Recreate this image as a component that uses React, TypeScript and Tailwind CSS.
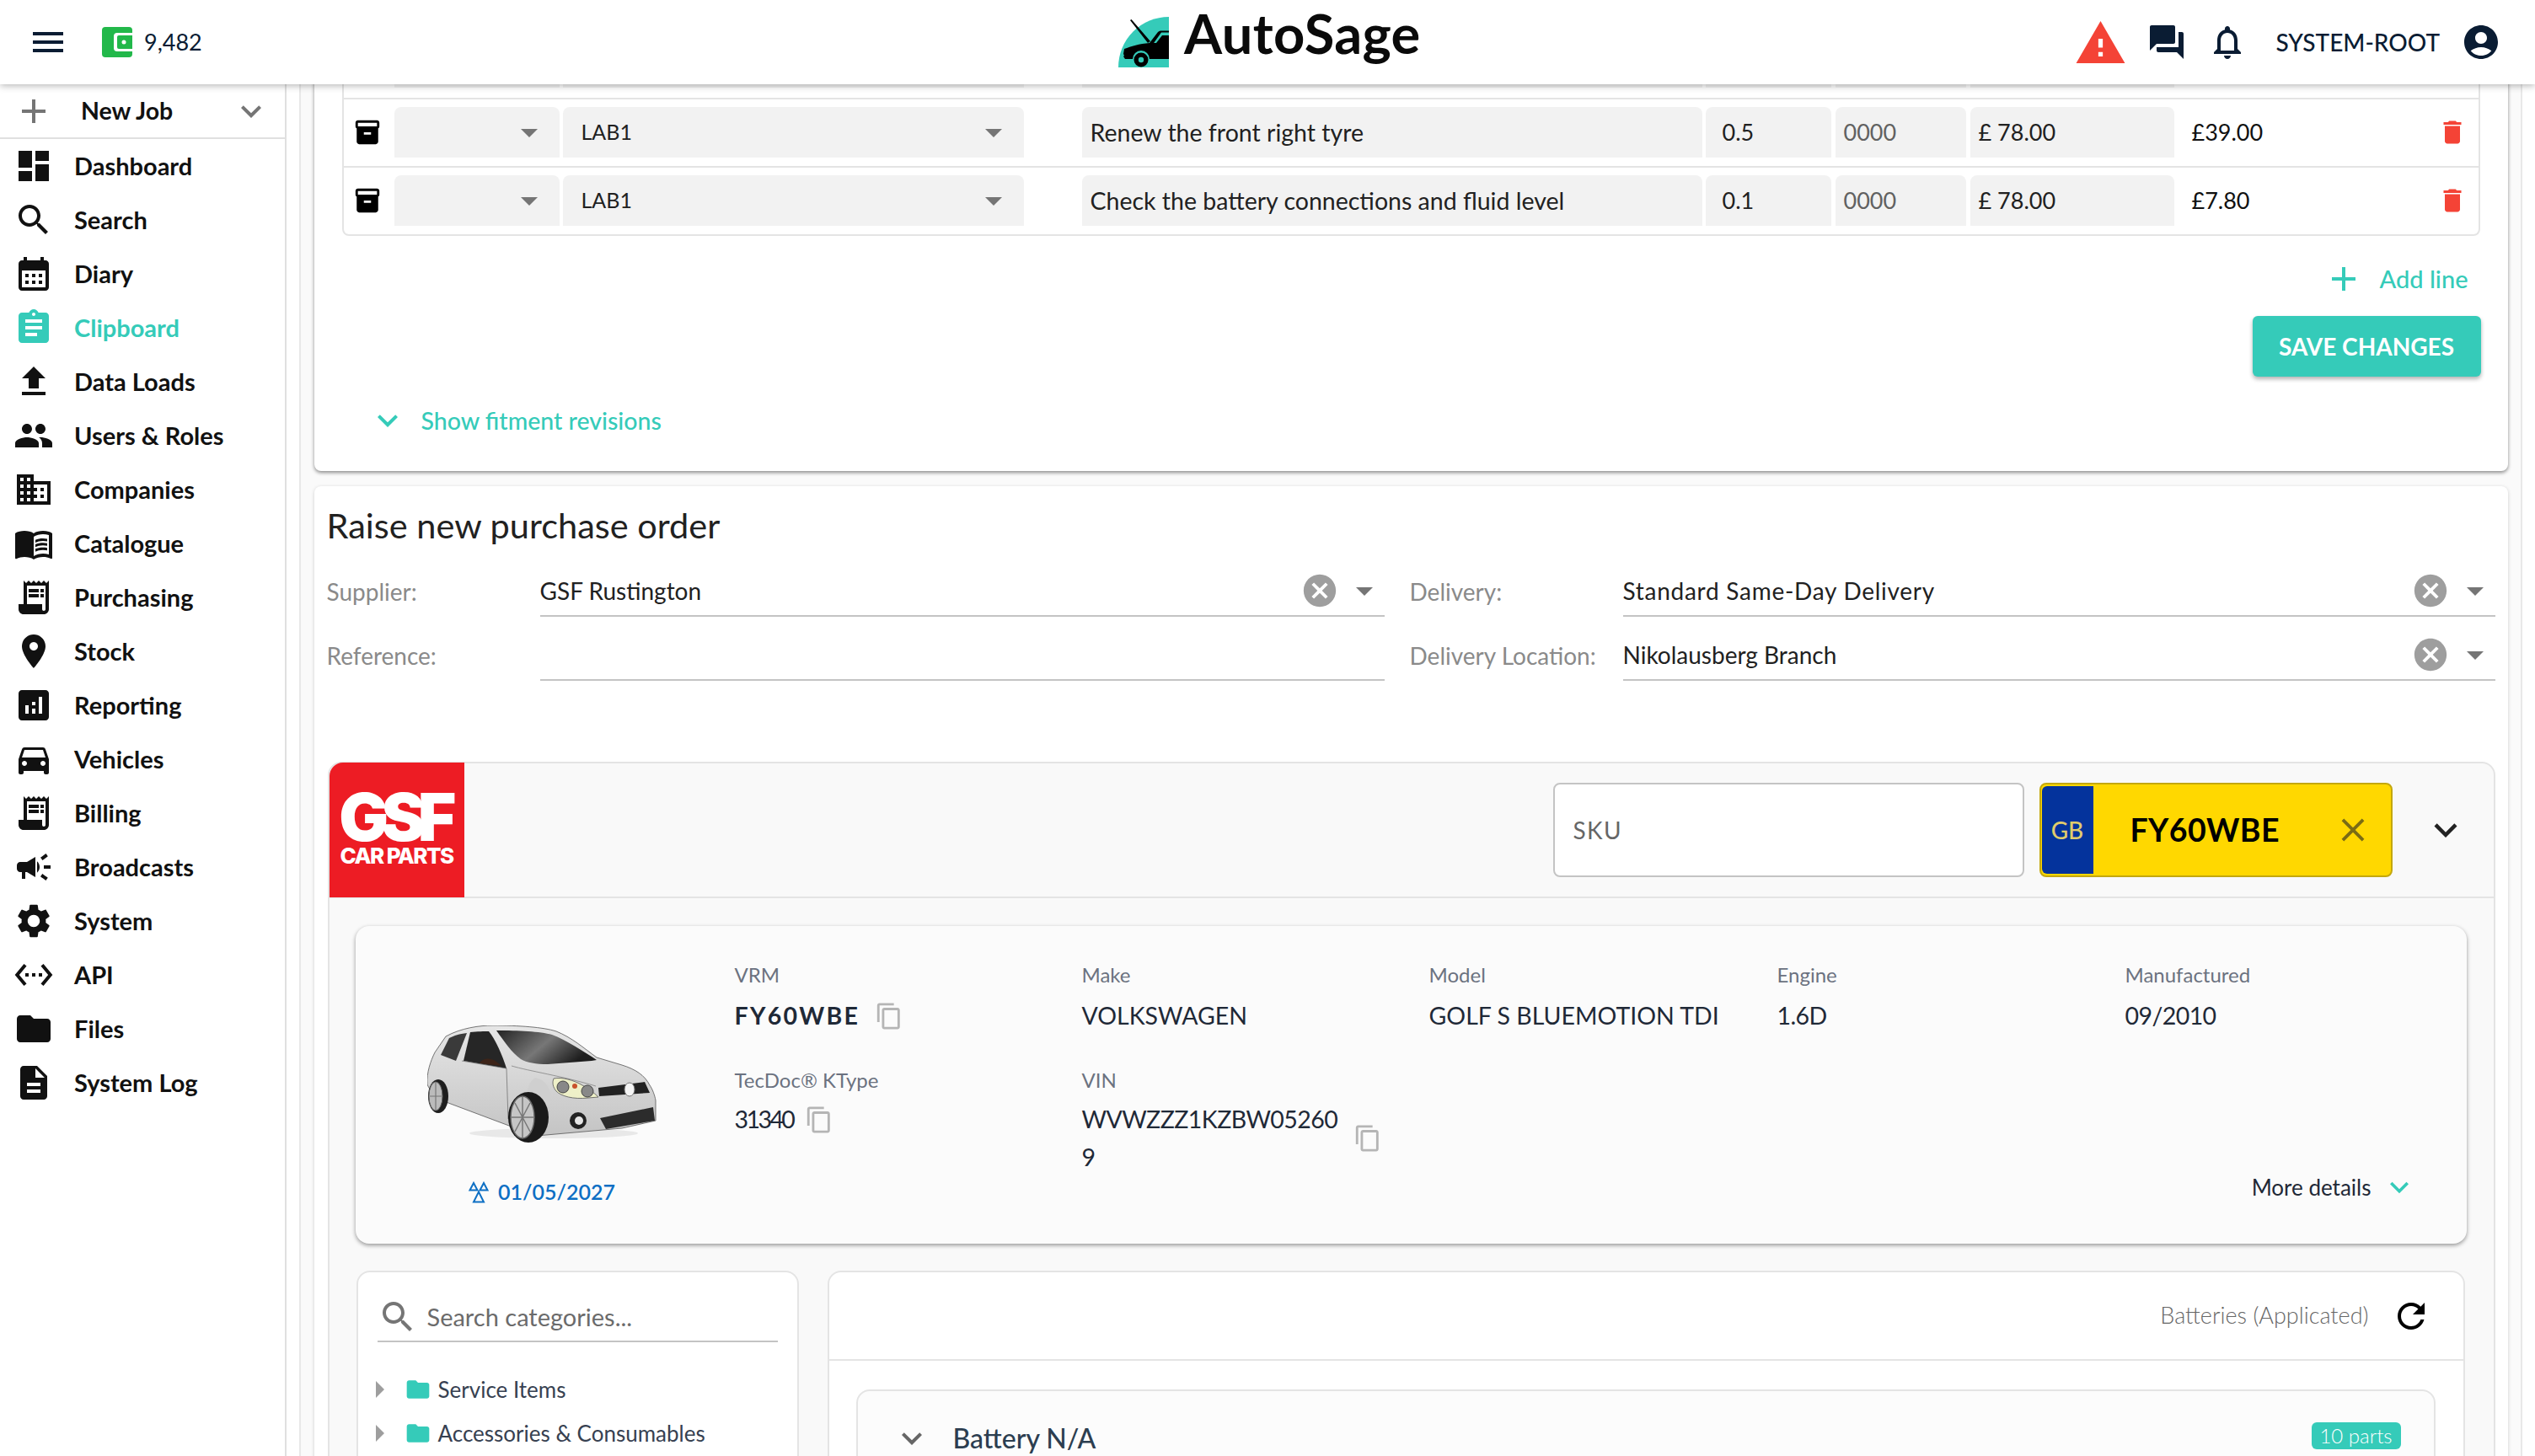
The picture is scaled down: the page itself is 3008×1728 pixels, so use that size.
import React from "react";

const P = {
  menu: "M3 18h18v-2H3v2zm0-5h18v-2H3v2zm0-7v2h18V6H3z",
  add: "M19 13h-6v6h-2v-6H5v-2h6V5h2v6h6v2z",
  more: "M16.59 8.59L12 13.17 7.41 8.59 6 10l6 6 6-6z",
  dashboard: "M3 13h8V3H3v10zm0 8h8v-6H3v6zm10 0h8V11h-8v10zm0-18v6h8V3h-8z",
  search:
    "M15.5 14h-.79l-.28-.27C15.41 12.59 16 11.11 16 9.5 16 5.91 13.09 3 9.5 3S3 5.91 3 9.5 5.91 16 9.5 16c1.61 0 3.09-.59 4.23-1.57l.27.28v.79l5 4.99L20.49 19l-4.99-5zm-6 0C7.01 14 5 11.99 5 9.5S7.01 5 9.5 5 14 7.01 14 9.5 11.99 14 9.5 14z",
  diary:
    "M19 4h-1V2h-2v2H8V2H6v2H5c-1.11 0-1.99.9-1.99 2L3 20c0 1.1.89 2 2 2h14c1.1 0 2-.9 2-2V6c0-1.1-.9-2-2-2zm0 16H5V10h14v10zM9 14H7v-2h2v2zm4 0h-2v-2h2v2zm4 0h-2v-2h2v2zm-8 4H7v-2h2v2zm4 0h-2v-2h2v2zm4 0h-2v-2h2v2z",
  clipboard:
    "M19 3h-4.18C14.4 1.84 13.3 1 12 1c-1.3 0-2.4.84-2.82 2H5c-1.1 0-2 .9-2 2v14c0 1.1.9 2 2 2h14c1.1 0 2-.9 2-2V5c0-1.1-.9-2-2-2zm-7 0c.55 0 1 .45 1 1s-.45 1-1 1-1-.45-1-1 .45-1 1-1zm2 14H7v-2h7v2zm3-4H7v-2h10v2zm0-4H7V7h10v2z",
  upload: "M9 16h6v-6h4l-7-7-7 7h4v6zm-4 2h14v2H5v-2z",
  people:
    "M16 11c1.66 0 2.99-1.34 2.99-3S17.66 5 16 5c-1.66 0-3 1.34-3 3s1.34 3 3 3zm-8 0c1.66 0 2.99-1.34 2.99-3S9.66 5 8 5C6.34 5 5 6.34 5 8s1.34 3 3 3zm0 2c-2.33 0-7 1.17-7 3.5V19h14v-2.5c0-2.33-4.67-3.5-7-3.5zm8 0c-.29 0-.62.02-.97.05 1.16.84 1.97 1.97 1.97 3.45V19h6v-2.5c0-2.33-4.67-3.5-7-3.5z",
  domain:
    "M12 7V3H2v18h20V7H12zM6 19H4v-2h2v2zm0-4H4v-2h2v2zm0-4H4V9h2v2zm0-4H4V5h2v2zm4 12H8v-2h2v2zm0-4H8v-2h2v2zm0-4H8V9h2v2zm0-4H8V5h2v2zm10 12h-8v-2h2v-2h-2v-2h2v-2h-2V9h8v10zm-2-8h-2v2h2v-2zm0 4h-2v2h2v-2z",
  book:
    "M21 5c-1.11-.35-2.33-.5-3.5-.5-1.95 0-4.05.4-5.5 1.5-1.45-1.1-3.55-1.5-5.5-1.5S2.45 4.9 1 6v14.65c0 .25.25.5.5.5.1 0 .15-.05.25-.05C3.1 20.45 5.05 20 6.5 20c1.95 0 4.05.4 5.5 1.5 1.35-.85 3.8-1.5 5.5-1.5 1.65 0 3.35.3 4.75 1.05.1.05.15.05.25.05.25 0 .5-.25.5-.5V6c-.6-.45-1.25-.75-2-1zm0 13.5c-1.1-.35-2.3-.5-3.5-.5-1.7 0-4.15.65-5.5 1.5V8c1.35-.85 3.8-1.5 5.5-1.5 1.2 0 2.4.15 3.5.5v11.5zM17.5 10.5c.88 0 1.73.09 2.5.26V9.24c-.79-.15-1.64-.24-2.5-.24-1.7 0-3.24.29-4.5.83v1.66c1.13-.64 2.7-.99 4.5-.99zM13 12.49v1.66c1.13-.64 2.7-.99 4.5-.99.88 0 1.73.09 2.5.26V11.9c-.79-.15-1.64-.24-2.5-.24-1.7 0-3.24.3-4.5.83zM17.5 14.33c-1.7 0-3.24.29-4.5.83v1.66c1.13-.64 2.7-.99 4.5-.99.88 0 1.73.09 2.5.26v-1.52c-.79-.16-1.64-.24-2.5-.24z",
  receipt:
    "M19.5 3.5 18 2l-1.5 1.5L15 2l-1.5 1.5L12 2l-1.5 1.5L9 2 7.5 3.5 6 2v14H3v3c0 1.66 1.34 3 3 3h12c1.66 0 3-1.34 3-3V2l-1.5 1.5zM19 19c0 .55-.45 1-1 1s-1-.45-1-1v-3H8V5h11v14zM9 7h6v2H9zm7 0h2v2h-2zm-7 3h6v2H9zm7 0h2v2h-2z",
  place:
    "M12 2C8.13 2 5 5.13 5 9c0 5.25 7 13 7 13s7-7.75 7-13c0-3.87-3.13-7-7-7zm0 9.5c-1.38 0-2.5-1.12-2.5-2.5s1.12-2.5 2.5-2.5 2.5 1.12 2.5 2.5-1.12 2.5-2.5 2.5z",
  analytics:
    "M19 3H5c-1.1 0-2 .9-2 2v14c0 1.1.9 2 2 2h14c1.1 0 2-.9 2-2V5c0-1.1-.9-2-2-2zM9 17H7v-5h2v5zm4 0h-2v-3h2v3zm0-5h-2v-2h2v2zm4 5h-2V7h2v10z",
  car:
    "M18.92 6.01C18.72 5.42 18.16 5 17.5 5h-11c-.66 0-1.21.42-1.42 1.01L3 12v8c0 .55.45 1 1 1h1c.55 0 1-.45 1-1v-1h12v1c0 .55.45 1 1 1h1c.55 0 1-.45 1-1v-8l-2.08-5.99zM6.5 16c-.83 0-1.5-.67-1.5-1.5S5.67 13 6.5 13s1.5.67 1.5 1.5S7.33 16 6.5 16zm11 0c-.83 0-1.5-.67-1.5-1.5s.67-1.5 1.5-1.5 1.5.67 1.5 1.5-.67 1.5-1.5 1.5zM5 11l1.5-4.5h11L19 11H5z",
  campaign:
    "M18 11v2h4v-2h-4zm-2 6.61c.96.71 2.21 1.65 3.2 2.39.4-.53.8-1.07 1.2-1.6-.99-.74-2.24-1.68-3.2-2.4-.4.54-.8 1.08-1.2 1.61zM20.4 5.6c-.4-.53-.8-1.07-1.2-1.6-.99.74-2.24 1.68-3.2 2.4.4.53.8 1.07 1.2 1.6.96-.72 2.21-1.65 3.2-2.4zM4 9c-1.1 0-2 .9-2 2v2c0 1.1.9 2 2 2h1v4h2v-4h1l5 3V6L8 9H4zm11.5 3c0-1.33-.58-2.53-1.5-3.35v6.69c.92-.81 1.5-2.01 1.5-3.34z",
  settings:
    "M19.14 12.94c.04-.3.06-.61.06-.94 0-.32-.02-.64-.07-.94l2.03-1.58c.18-.14.23-.41.12-.61l-1.92-3.32c-.12-.22-.37-.29-.59-.22l-2.39.96c-.5-.38-1.03-.7-1.62-.94l-.36-2.54c-.04-.24-.24-.41-.48-.41h-3.84c-.24 0-.43.17-.47.41l-.36 2.54c-.59.24-1.13.57-1.62.94l-2.39-.96c-.22-.08-.47 0-.59.22L2.74 8.87c-.12.21-.08.47.12.61l2.03 1.58c-.05.3-.09.63-.09.94s.02.64.07.94l-2.03 1.58c-.18.14-.23.41-.12.61l1.92 3.32c.12.22.37.29.59.22l2.39-.96c.5.38 1.03.7 1.62.94l.36 2.54c.05.24.24.41.48.41h3.84c.24 0 .44-.17.47-.41l.36-2.54c.59-.24 1.13-.56 1.62-.94l2.39.96c.22.08.47 0 .59-.22l1.92-3.32c.12-.22.07-.47-.12-.61l-2.01-1.58zM12 15.6c-1.98 0-3.6-1.62-3.6-3.6s1.62-3.6 3.6-3.6 3.6 1.62 3.6 3.6-1.62 3.6-3.6 3.6z",
  api:
    "M7.77 6.76L6.23 5.48.82 12l5.41 6.52 1.54-1.28L3.42 12l4.35-5.24zM7 13h2v-2H7v2zm10-2h-2v2h2v-2zm-6 2h2v-2h-2v2zm6.77-7.52l-1.54 1.28L20.58 12l-4.35 5.24 1.54 1.28L23.18 12l-5.41-6.52z",
  folder: "M10 4H4c-1.1 0-1.99.9-1.99 2L2 18c0 1.1.9 2 2 2h16c1.1 0 2-.9 2-2V8c0-1.1-.9-2-2-2h-8l-2-2z",
  doc:
    "M14 2H6c-1.1 0-1.99.9-1.99 2L4 20c0 1.1.89 2 1.99 2H18c1.1 0 2-.9 2-2V8l-6-6zm2 16H8v-2h8v2zm0-4H8v-2h8v2zm-3-5V3.5L18.5 9H13z",
  inventory:
    "M20 2H4c-1 0-2 .9-2 2v3.01c0 .72.43 1.34 1 1.69V20c0 1.1 1.1 2 2 2h14c.9 0 2-.9 2-2V8.7c.57-.35 1-.97 1-1.69V4c0-1.1-1-2-2-2zm-5 12H9v-2h6v2zm5-7H4V4l16-.02V7z",
  trash: "M6 19c0 1.1.9 2 2 2h8c1.1 0 2-.9 2-2V7H6v12zM19 4h-3.5l-1-1h-5l-1 1H5v2h14V4z",
  drop: "M7 10l5 5 5-5z",
  right: "M10 17l5-5-5-5v10z",
  cancel:
    "M12 2C6.47 2 2 6.47 2 12s4.47 10 10 10 10-4.47 10-10S17.53 2 12 2zm5 13.59L15.59 17 12 13.41 8.41 17 7 15.59 10.59 12 7 8.41 8.41 7 12 10.59 15.59 7 17 8.41 13.41 12 17 15.59z",
  copy: "M16 1H4c-1.1 0-2 .9-2 2v14h2V3h12V1zm3 4H8c-1.1 0-2 .9-2 2v14c0 1.1.9 2 2 2h11c1.1 0 2-.9 2-2V7c0-1.1-.9-2-2-2zm0 16H8V7h11v14z",
  refresh:
    "M17.65 6.35C16.2 4.9 14.21 4 12 4c-4.42 0-7.99 3.58-7.99 8s3.57 8 7.99 8c3.73 0 6.84-2.55 7.73-6h-2.08c-.82 2.33-3.04 4-5.65 4-3.31 0-6-2.69-6-6s2.69-6 6-6c1.66 0 3.14.69 4.22 1.78L13 11h7V4l-2.35 2.35z",
  close: "M19 6.41L17.59 5 12 10.59 6.41 5 5 6.41 10.59 12 5 17.59 6.41 19 12 13.41 17.59 19 19 17.59 13.41 12z",
  warning: "M1 21h22L12 2 1 21zm12-3h-2v-2h2v2zm0-4h-2v-4h2v4z",
  forum:
    "M21 6h-2v9H6v2c0 .55.45 1 1 1h11l4 4V7c0-.55-.45-1-1-1zm-4 6V3c0-.55-.45-1-1-1H3c-.55 0-1 .45-1 1v14l4-4h10c.55 0 1-.45 1-1z",
  bell:
    "M12 22c1.1 0 2-.9 2-2h-4c0 1.1.9 2 2 2zm6-6v-5c0-3.07-1.63-5.64-4.5-6.32V4c0-.83-.67-1.5-1.5-1.5s-1.5.67-1.5 1.5v.68C7.64 5.36 6 7.92 6 11v5l-2 2v1h16v-1l-2-2zm-2 1H8v-6c0-2.48 1.51-4.5 4-4.5s4 2.02 4 4.5v6z",
  account:
    "M12 2C6.48 2 2 6.48 2 12s4.48 10 10 10 10-4.48 10-10S17.52 2 12 2zm0 4c1.93 0 3.5 1.57 3.5 3.5S13.93 13 12 13s-3.5-1.57-3.5-3.5S10.07 6 12 6zm0 14c-2.03 0-4.43-.82-6.14-2.88C7.55 15.8 9.68 15 12 15s4.45.8 6.14 2.12C16.43 19.18 14.03 20 12 20z",
};

type IconProps = { d: string; className?: string; box?: string };

const Icon: React.FC<IconProps> = ({ d, className, box = "0 0 24 24" }) => (
  <svg viewBox={box} className={className} fill="currentColor">
    <path d={d} />
  </svg>
);

const NAV = [
  { label: "Dashboard", icon: P.dashboard },
  { label: "Search", icon: P.search },
  { label: "Diary", icon: P.diary },
  { label: "Clipboard", icon: P.clipboard, active: true },
  { label: "Data Loads", icon: P.upload },
  { label: "Users & Roles", icon: P.people },
  { label: "Companies", icon: P.domain },
  { label: "Catalogue", icon: P.book },
  { label: "Purchasing", icon: P.receipt },
  { label: "Stock", icon: P.place },
  { label: "Reporting", icon: P.analytics },
  { label: "Vehicles", icon: P.car },
  { label: "Billing", icon: P.receipt },
  { label: "Broadcasts", icon: P.campaign },
  { label: "System", icon: P.settings },
  { label: "API", icon: P.api },
  { label: "Files", icon: P.folder },
  { label: "System Log", icon: P.doc },
];

const Logo = () => (
  <svg viewBox="0 0 60 60" className="h-[60px] w-[60px]">
    <path d="M60 0A60 60 0 0 0 0 60H60Z" fill="#35cbb9" />
    <path d="M14 4l1.5-1L38 29l-3 2Z" fill="#000" />
    <path d="M37 31l10-13c1-1 2-1.500 3-1.500H60v2H51l-10 14Z" fill="#000" />
    <path d="M7 38c8-3 18-6 30-7h8l7-9h8V50H8l-2-3 1-1-1-2Z" fill="#000" />
    <circle cx="27" cy="50" r="10" fill="#35cbb9" />
    <circle cx="27" cy="51" r="8.500" fill="#000" />
    <circle cx="27" cy="51" r="3.200" fill="#35cbb9" />
  </svg>
);

const Wallet = () => (
  <svg viewBox="0 0 38 36" className="h-[36px] w-[38px]">
    <rect x="0" y="0" width="36" height="36" rx="4" fill="#22b84a" />
    <path d="M18 7H38V29H18a4 4 0 0 1-4-4V11a4 4 0 0 1 4-4Z" fill="#fff" />
    <path d="M20 10H36V26H20a2 2 0 0 1-2-2V12a2 2 0 0 1 2-2Z" fill="#22b84a" />
    <circle cx="26" cy="18" r="2.500" fill="#fff" />
  </svg>
);

const CarPicture = () => (
  <svg viewBox="0 0 272 140" className="h-[140px] w-[272px]">
    <defs>
      <linearGradient id="glass" x1="0" x2="1" y1="0" y2="0.4">
        <stop offset="0" stopColor="#222" />
        <stop offset="0.55" stopColor="#777" />
        <stop offset="1" stopColor="#1e1e1e" />
      </linearGradient>
      <linearGradient id="paint" x1="0" x2="0" y1="0" y2="1">
        <stop offset="0" stopColor="#e6e6e6" />
        <stop offset="1" stopColor="#c4c4c4" />
      </linearGradient>
    </defs>
    <ellipse cx="150" cy="128" rx="100" ry="6" fill="#dcdcdc" opacity="0.6" />
    <path
      d="M22 13C40 3 62 0 78 0c30 0 60 2 75 7 18 7 33 20 48 31l30 9c16 5 27 12 33 24 3 4 6 12 7 18v24l-40 9-90 8-12 1L25 92C12 86 3 78 0 70c-1-14 4-28 9-38Z"
      fill="url(#paint)"
      stroke="#555"
      strokeWidth="0.8"
    />
    <path d="M82 6c26 0 52 1 66 5 16 6 38 20 53 30l-6 1-52 4c-14 0-25-2-32-6C100 32 92 20 82 6Z" fill="url(#glass)" />
    <path d="M26 15c6-3 12-5 21-6l-13 33-18-7Z" fill="#3a3a3a" />
    <path d="M51 8c8-1 17-1 22-1 8 10 16 28 21 44l-51-9Z" fill="#262626" />
    <path d="M62 45c4-7 14-7 20-2l6 5Z" fill="#3d2418" />
    <path d="M41 42l53 9 2 60" fill="none" stroke="#666" strokeWidth="0.7" />
    <path d="M100 48c20 6 60 12 100 24" fill="none" stroke="#777" strokeWidth="0.7" />
    <path d="M128 62c14 3 20 14 18 32-10 0-20-6-28-14 2-8 4-14 10-18Z" fill="#cfcfcf" />
    <path d="M150 63c10-2 24 2 34 8 6 3 14 9 19 14l-12 1c-18 2-32-2-38-8-4-5-5-10-3-15Z" fill="#eef0c8" stroke="#555" strokeWidth="0.8" />
    <circle cx="161" cy="73" r="7" fill="#888" stroke="#444" />
    <circle cx="190" cy="78" r="7" fill="#888" stroke="#444" />
    <circle cx="175" cy="72" r="3" fill="#c9522c" />
    <path d="M203 74L258 67L264 80L204 84Z" fill="#222" />
    <ellipse cx="240" cy="76" rx="6" ry="8" fill="#f4f4f4" stroke="#777" />
    <path d="M205 110L268 97L270 113L212 123Z" fill="#2c2c2c" />
    <circle cx="179" cy="113" r="10" fill="#222" />
    <circle cx="180" cy="113" r="5" fill="#e5e5e5" />
    <ellipse cx="120" cy="109" rx="24" ry="30" fill="#1a1a1a" />
    <ellipse cx="113" cy="109" rx="14" ry="25" fill="#c6c6c6" stroke="#666" strokeWidth="1.500" />
    <path d="M113 85v48M100 109h26M104 92l18 34M104 126l18-34" stroke="#777" strokeWidth="1.500" />
    <ellipse cx="13" cy="84" rx="12" ry="20" fill="#1e1e1e" />
    <ellipse cx="10" cy="84" rx="8" ry="17" fill="#bbb" stroke="#666" />
    <path d="M10 68v32M3 84h14" stroke="#777" strokeWidth="1.200" />
  </svg>
);

const MotIcon = () => (
  <svg viewBox="0 0 26 26" className="h-[26px] w-[26px]" fill="none" stroke="#0d6fc4" strokeWidth="2">
    <path d="M7 2l4.500 8.500H2.500Z" />
    <path d="M19 2l4.500 8.500H14.500Z" />
    <path d="M13 12.500l6 12H7Z" />
  </svg>
);

const Select: React.FC<{ value?: string; className: string }> = ({ value, className }) => (
  <div className={`flex h-[60px] items-center justify-between rounded-t-lg bg-[#f2f2f2] pr-[12px] pl-[22px] ${className}`}>
    <span className="text-[25px] font-[400] text-[#212121]">{value}</span>
    <Icon d={P.drop} className="h-[48px] w-[48px] text-[#757575]" />
  </div>
);

const Cell: React.FC<{ children?: React.ReactNode; className: string }> = ({ children, className }) => (
  <div className={`flex h-[60px] items-center rounded-t-lg bg-[#f2f2f2] px-[10px] font-[400] ${className}`}>
    {children}
  </div>
);

type JobRowProps = { desc?: string; hours?: string; total?: string; first?: boolean };

const JobRow: React.FC<JobRowProps> = ({ desc, hours, total, first }) => (
  <div className={`flex h-[81px] items-start pt-[9px] ${first ? "" : "border-t-2 border-[#e4e4e4]"}`}>
    <div className="flex h-[60px] w-[60px] items-center justify-center pr-[3px]">
      {!first && <Icon d={P.inventory} className="h-[34px] w-[34px] text-black" />}
    </div>
    <Select className="w-[196px]" />
    <Select value={first ? undefined : "LAB1"} className="ml-[4px] w-[547px]" />
    <Cell className="ml-[69px] w-[736px] text-[28.5px] text-[#212121]">{desc}</Cell>
    <Cell className="ml-[4px] w-[149px] pl-[20px] text-[27px] text-[#212121]">{hours}</Cell>
    <Cell className="ml-[5px] w-[155px] text-[27px] text-[#616161]">{first ? "" : "0000"}</Cell>
    <Cell className="ml-[5px] w-[242px] text-[27px] text-[#212121]">{first ? "" : "£ 78.00"}</Cell>
    <div className="ml-[21px] flex h-[60px] w-[291px] items-center text-[27px] text-[#111]">{total}</div>
    <div className="flex h-[60px] items-center">
      {!first && <Icon d={P.trash} className="h-[36px] w-[36px] text-[#f44336]" />}
    </div>
  </div>
);

type FormFieldProps = {
  label: string;
  value?: string;
  width: string;
  clear?: boolean;
  valueClass?: string;
};

const FormField: React.FC<FormFieldProps> = ({ label, value, width, clear, valueClass }) => (
  <div className="flex h-[60px] items-center">
    <div className="w-[253px] text-[28px] font-[400] text-[#8a8a8a]">{label}</div>
    <div className={`flex h-[60px] items-center justify-between border-b-2 border-[#c4c4c4] ${width}`}>
      <span className={`text-[28px] text-[#212121] ${valueClass ?? ""}`}>{value}</span>
      {clear && (
        <div className="flex items-center">
          <Icon d={P.cancel} className="h-[46px] w-[46px] text-[#9e9e9e]" />
          <Icon d={P.drop} className="ml-[6px] h-[48px] w-[48px] text-[#757575]" />
        </div>
      )}
    </div>
  </div>
);

const Spec: React.FC<{ label: string; children: React.ReactNode; second?: boolean }> = ({ label, children, second }) => (
  <div className={second ? "mt-[39px]" : "mt-[44px]"}>
    <div className="flex h-[28px] items-center text-[24px] text-[#6b7280]">{label}</div>
    <div className={`flex items-center text-[28.5px] leading-[45px] text-[#1f2937] ${second ? "mt-[10px]" : "mt-[12px]"}`}>
      {children}
    </div>
  </div>
);

const Copy: React.FC<{ className?: string }> = ({ className }) => (
  <Icon d={P.copy} className={`h-[34px] w-[34px] text-[#b5b5b5] ${className ?? ""}`} />
);

export default function App() {
  return (
    <div className="flex h-[1728px] w-[3008px] flex-col overflow-hidden bg-white font-[Lato,sans-serif] text-[#111]">
      <header className="relative z-10 flex h-[100px] shrink-0 items-center bg-white shadow-[0_2px_8px_rgba(0,0,0,0.28)]">
        <Icon d={P.menu} className="ml-[33px] h-[48px] w-[48px] text-[#0a1c33]" />
        <div className="ml-[40px]">
          <Wallet />
        </div>
        <span className="ml-[12px] w-[70px] text-[27px] text-[#0a1c33]">9,482</span>
        <div className="ml-[1086px] flex items-center">
          <Logo />
          <span className="ml-[18px] -mt-[21px] text-[65px] leading-none font-[700] tracking-[0.005em] text-[#0a0a0a]">AutoSage</span>
        </div>
        <div className="ml-auto flex items-center pr-[40px]">
          <Icon d={P.warning} box="1 2 22 19" className="h-[50px] w-[59px] text-[#f44336]" />
          <Icon d={P.forum} className="ml-[25px] h-[48px] w-[48px] text-[#0a1c33]" />
          <Icon d={P.bell} className="ml-[24px] h-[48px] w-[48px] text-[#0a1c33]" />
          <span className="ml-[34px] text-[28px] font-[500] text-[#0a1c33]">SYSTEM-ROOT</span>
          <Icon d={P.account} className="ml-[25px] h-[48px] w-[48px] text-[#0a1c33]" />
        </div>
      </header>

      <div className="flex min-h-0 flex-1">
        <aside className="w-[340px] shrink-0 border-r-2 border-[#e0e0e0] bg-white">
          <div className="flex h-[65px] items-center border-b-2 border-[#e0e0e0]">
            <Icon d={P.add} className="ml-[16px] h-[48px] w-[48px] text-[#757575]" />
            <span className="ml-[32px] text-[28.500px] font-[700]">New Job</span>
            <Icon d={P.more} className="ml-auto mr-[16px] h-[48px] w-[48px] text-[#757575]" />
          </div>
          {NAV.map((item) => (
            <div key={item.label} className={`flex h-[64px] items-center ${item.active ? "text-[#35cbb9]" : "text-[#111]"}`}>
              <Icon d={item.icon} className="ml-[16px] h-[48px] w-[48px]" />
              <span className="ml-[24px] text-[29px] font-[700]">{item.label}</span>
            </div>
          ))}
        </aside>

        <div className="ml-[15px] flex w-[2638px] justify-center overflow-hidden border-x-2 border-[#e8e8e8] bg-[#fafafa]">
          <main className="-mt-[65px] w-[2603px] shrink-0">
            <section className="flex h-[524px] flex-col rounded-b-lg bg-white px-[33px] shadow-[0_2px_4px_rgba(0,0,0,0.45)]">
              <div className="rounded-b-lg border-x-2 border-b-2 border-[#e4e4e4]">
                <JobRow first />
                <JobRow desc="Renew the front right tyre" hours="0.5" total="£39.00" />
                <JobRow desc="Check the battery connections and fluid level" hours="0.1" total="£7.80" />
              </div>
              <div className="mt-[29px] flex h-[44px] items-center justify-end pr-[14px] text-[29px] font-[500] text-[#35cbb9]">
                <Icon d={P.add} className="h-[48px] w-[48px]" />
                <span className="ml-[19px]">Add line</span>
              </div>
              <div className="-mr-[1px] mt-[22px] flex justify-end">
                <div className="flex h-[72px] w-[271px] items-center justify-center rounded-md bg-[#35cbb9] text-[28px] font-[700] text-white shadow-[0_3px_5px_rgba(0,0,0,0.3)]">
                  SAVE CHANGES
                </div>
              </div>
              <div className="mt-[30px] flex h-[44px] items-center pl-[30px] text-[28.500px] font-[500] text-[#35cbb9]">
                <Icon d={P.more} className="h-[48px] w-[48px]" />
                <span className="ml-[16px]">Show fitment revisions</span>
              </div>
            </section>

            <section className="mt-[18px] rounded-t-lg bg-white pl-[15px] shadow-[0_1px_4px_rgba(0,0,0,0.18)]">
              <h2 className="flex h-[50px] items-center pt-[46px] pb-[46px] text-[41.500px] font-[400] text-[#212121]">Raise new purchase order</h2>
              <div className="mt-[3px] flex">
                <div className="flex flex-col gap-[16px]">
                  <FormField label="Supplier:" value="GSF Rustington" width="w-[1002px]" clear />
                  <FormField label="Reference:" width="w-[1002px]" />
                </div>
                <div className="ml-[30px] flex flex-col gap-[16px]">
                  <FormField label="Delivery:" value="Standard Same-Day Delivery" width="w-[1035px]" valueClass="tracking-[0.026em]" clear />
                  <FormField label="Delivery Location:" value="Nikolausberg Branch" width="w-[1035px]" clear />
                </div>
              </div>

              <div className="mt-[96px] ml-[1px] w-[2572px] rounded-t-2xl border-2 border-[#e4e4e4] bg-[#f9f9f9]">
                <div className="flex h-[160px] items-center border-b-2 border-[#e4e4e4]">
                  <div className="flex h-[160px] w-[160px] flex-col items-center justify-center rounded-tl-2xl bg-[#ed1c24] text-white">
                    <span className="-ml-[6px] font-[Inter,sans-serif] text-[78px] leading-[62px] font-[900] tracking-[-0.11em]">GSF</span>
                    <span className="font-[Inter,sans-serif] text-[26px] leading-[30px] font-[800] tracking-[-0.06em] whitespace-nowrap">CAR PARTS</span>
                  </div>
                  <div className="ml-auto flex h-[112px] w-[559px] items-center rounded-lg border-2 border-[#c4c4c4] bg-white pl-[22px] text-[28px] tracking-[0.05em] text-[#666]">
                    SKU
                  </div>
                  <div className="ml-[18px] flex h-[112px] w-[419px] items-center overflow-hidden rounded-lg border-2 border-[#c4a80e] bg-[#ffd800]">
                    <div className="ml-[1px] flex h-[104px] w-[61px] items-center justify-center rounded-tl-md rounded-bl-md bg-[#04339c] text-[28px] font-[500] text-[#e0cc6c]">
                      GB
                    </div>
                    <span className="ml-[44px] text-[37.500px] font-[700] tracking-[0.01em] text-black">FY60WBE</span>
                    <Icon d={P.close} className="ml-auto mr-[22px] h-[46px] w-[46px] text-[#7a6c14]" />
                  </div>
                  <div className="flex w-[120px] justify-center pl-[6px]">
                    <Icon d={P.more} className="h-[54px] w-[54px] text-[#222]" />
                  </div>
                </div>

                <div className="pt-[33px] pl-[31px]">
                  <div className="flex h-[377px] w-[2505px] rounded-2xl bg-[#fbfbfb] shadow-[0_2px_5px_rgba(0,0,0,0.4)]">
                    <div className="flex w-[450px] flex-col items-center pt-[118px] pr-[8px]">
                      <CarPicture />
                      <div className="mt-[41px] flex h-[34px] items-center">
                        <MotIcon />
                        <span className="ml-[10px] text-[25px] font-[600] text-[#0d6fc4]">01/05/2027</span>
                      </div>
                    </div>
                    <div className="grid flex-1 grid-cols-[412px_412px_413px_413px_1fr] grid-rows-[130px_1fr]">
                      <Spec label="VRM">
                        <span className="font-[700] tracking-[0.08em]">FY60WBE</span>
                        <Copy className="ml-[18px]" />
                      </Spec>
                      <Spec label="Make">VOLKSWAGEN</Spec>
                      <Spec label="Model">GOLF S BLUEMOTION TDI</Spec>
                      <Spec label="Engine">
                        <span className="tracking-[-0.02em]">1.6D</span>
                      </Spec>
                      <Spec label="Manufactured">
                        <span className="tracking-[-0.02em]">09/2010</span>
                      </Spec>
                      <Spec second label="TecDoc® KType">
                        <span className="tracking-[-0.09em]">31340</span>
                        <Copy className="ml-[14px]" />
                      </Spec>
                      <Spec second label="VIN">
                        <span className="tracking-[-0.02em]">
                          WVWZZZ1KZBW05260
                          <br />9
                        </span>
                        <Copy className="ml-[19px]" />
                      </Spec>
                      <div className="col-span-2" />
                      <div className="flex items-center justify-end self-end pr-[58px] pb-[45px] text-[26px] text-[#1f2937]">
                        More details
                        <Icon d={P.more} className="ml-[11px] h-[44px] w-[44px] text-[#35cbb9]" />
                      </div>
                    </div>
                  </div>

                  <div className="mt-[32px] flex">
                    <div className="ml-[1px] h-[400px] w-[525px] rounded-t-2xl border-2 border-[#e4e4e4] bg-white px-[23px] pt-[30px]">
                      <div className="flex h-[53px] items-center border-b-2 border-[#c4c4c4] pb-[6px]">
                        <Icon d={P.search} className="h-[48px] w-[48px] text-[#757575]" />
                        <span className="ml-[11px] text-[29px] text-[#6b6b6b]">Search categories...</span>
                      </div>
                      <div className="mt-[30px] flex h-[52px] items-center text-[26px] text-[#374151]">
                        <Icon d={P.right} className="-ml-[22px] h-[48px] w-[48px] text-[#9e9e9e]" />
                        <Icon d={P.folder} className="ml-[6px] h-[32px] w-[32px] text-[#35cbb9]" />
                        <span className="ml-[8px]">Service Items</span>
                      </div>
                      <div className="flex h-[52px] items-center text-[26px] text-[#374151]">
                        <Icon d={P.right} className="-ml-[22px] h-[48px] w-[48px] text-[#9e9e9e]" />
                        <Icon d={P.folder} className="ml-[6px] h-[32px] w-[32px] text-[#35cbb9]" />
                        <span className="ml-[8px]">Accessories &amp; Consumables</span>
                      </div>
                    </div>
                    <div className="ml-[34px] h-[400px] w-[1943px] rounded-t-2xl border-2 border-[#e4e4e4] bg-white">
                      <div className="flex h-[105px] items-center justify-end border-b-2 border-[#e4e4e4] pr-[38px]">
                        <span className="text-[27px] font-[300] text-[#666]">Batteries (Applicated)</span>
                        <Icon d={P.refresh} className="ml-[26px] h-[48px] w-[48px] text-black" />
                      </div>
                      <div className="mt-[34px] ml-[32px] flex h-[200px] w-[1874px] items-start rounded-t-2xl border-2 border-[#e4e4e4] bg-[#fcfcfc] pt-[32px]">
                        <Icon d={P.more} className="ml-[40px] h-[48px] w-[48px] text-[#666]" />
                        <span className="ml-[25px] text-[32px] font-[500] text-[#2c3e50]">Battery N/A</span>
                        <span className="ml-auto mr-[39px] mt-[5px] flex h-[32px] w-[106px] items-center justify-center rounded-md bg-[#35cbb9] text-[24px] font-[300] text-white">
                          10 parts
                        </span>
                      </div>
                    </div>
                  </div>
                </div>
              </div>
            </section>
          </main>
        </div>
      </div>
    </div>
  );
}
